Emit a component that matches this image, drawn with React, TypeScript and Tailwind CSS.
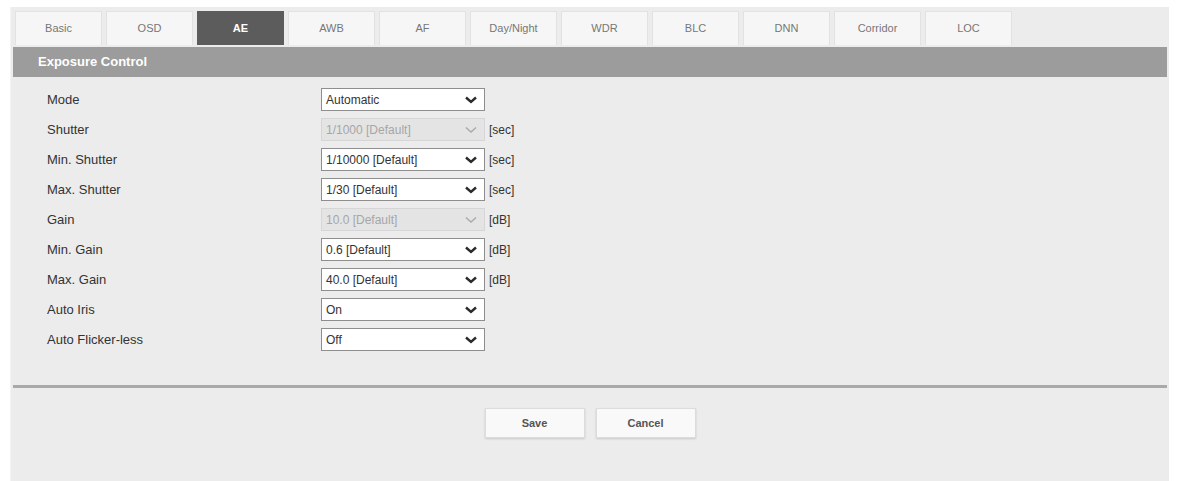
const tabs = ['Basic', 'OSD', 'AE', 'AWB', 'AF', 'Day/Night', 'WDR', 'BLC', 'DNN', 'Corridor', 'LOC'];

const rows = [
  { label: 'Mode', value: 'Automatic' },
  { label: 'Shutter', value: '1/1000 [Default]', unit: '[sec]', disabled: true },
  { label: 'Min. Shutter', value: '1/10000 [Default]', unit: '[sec]' },
  { label: 'Max. Shutter', value: '1/30 [Default]', unit: '[sec]' },
  { label: 'Gain', value: '10.0 [Default]', unit: '[dB]', disabled: true },
  { label: 'Min. Gain', value: '0.6 [Default]', unit: '[dB]' },
  { label: 'Max. Gain', value: '40.0 [Default]', unit: '[dB]' },
  { label: 'Auto Iris', value: 'On' },
  { label: 'Auto Flicker-less', value: 'Off' },
];

const Chevron = ({ disabled }: { disabled?: boolean }) => (
  <svg width="12" height="8" viewBox="0 0 12 8" className="shrink-0">
    <polyline
      points="1,1.5 6,6 11,1.5"
      fill="none"
      stroke={disabled ? '#a9a9a9' : '#2b2b2b'}
      strokeWidth={disabled ? 1.4 : 2.4}
    />
  </svg>
);

const Select = ({ value, disabled }: { value: string; disabled?: boolean }) => (
  <div
    className={
      disabled
        ? 'w-[164px] h-[23px] flex items-center justify-between pl-[4px] pr-[7px] border border-[#d6d6d6] bg-[#e4e4e4] text-[#a6a6a6] text-[12px]'
        : 'w-[164px] h-[23px] flex items-center justify-between pl-[4px] pr-[7px] border border-[#8e8e8e] bg-white text-[#333] text-[12px]'
    }
  >
    <span>{value}</span>
    <Chevron disabled={disabled} />
  </div>
);

export default function App() {
  return (
    <div
      className="w-[1179px] h-[481px] bg-white pt-[7px] pl-[10px] pr-[10px] overflow-hidden"
      style={{ fontFamily: '"Liberation Sans", Arial, sans-serif' }}
    >
      <div className="h-full bg-[#ececec] flex flex-col border-l border-[#f4f4f4]">
        {/* Tabs */}
        <div className="flex gap-[4px] pl-[4px] pt-[4px]">
          {tabs.map((t) => (
            <div
              key={t}
              className={
                t === 'AE'
                  ? 'w-[87px] h-[34px] flex items-center justify-center bg-[#5c5c5c] text-white text-[11px] font-bold'
                  : 'w-[87px] h-[34px] flex items-center justify-center bg-[#f6f6f6] border border-[#e2e2e2] border-b-0 text-[#777] text-[11px]'
              }
            >
              {t}
            </div>
          ))}
        </div>

        {/* Section header */}
        <div className="mt-[2px] mx-[2px] h-[30px] bg-[#9c9c9c] flex items-center pl-[25px] text-white text-[13px] font-bold">
          Exposure Control
        </div>

        {/* Form rows */}
        <div className="pt-[11px] pl-[36px] flex flex-col gap-[7px]">
          {rows.map((r) => (
            <div key={r.label} className="h-[23px] flex items-center">
              <div className="w-[274px] text-[13px] text-[#333]">{r.label}</div>
              <Select value={r.value} disabled={r.disabled} />
              {r.unit && <span className="ml-[4px] text-[12px] text-[#333]">{r.unit}</span>}
            </div>
          ))}
        </div>

        {/* Divider */}
        <div className="mt-[34px] mx-[2px] h-[3px] bg-[#a9a9a9]" />

        {/* Buttons */}
        <div className="mt-[20px] flex justify-center gap-[11px]">
          <button className="w-[100px] h-[30px] bg-[#f9f9f9] border border-[#dcdcdc] shadow-[0_1px_2px_rgba(0,0,0,0.15)] text-[11px] font-bold text-[#555]">
            Save
          </button>
          <button className="w-[100px] h-[30px] bg-[#f9f9f9] border border-[#dcdcdc] shadow-[0_1px_2px_rgba(0,0,0,0.15)] text-[11px] font-bold text-[#555]">
            Cancel
          </button>
        </div>
      </div>
    </div>
  );
}
